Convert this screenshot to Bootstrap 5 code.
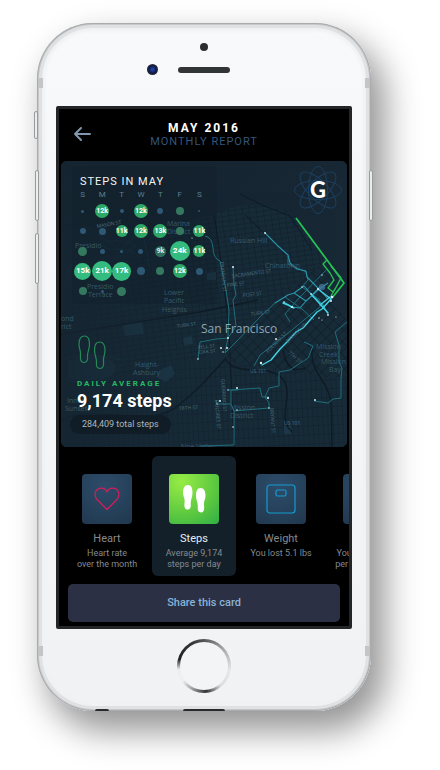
<!DOCTYPE html>
<html lang="en">
<head>
<meta charset="utf-8">
<meta name="viewport" content="width=device-width, initial-scale=1">
<title>Monthly report – May 2016</title>
<link rel="stylesheet" href="https://cdn.jsdelivr.net/npm/bootstrap@5.3.0/dist/css/bootstrap.min.css">
<style>
  body { background: #fff; font-family: Roboto, "Liberation Sans", sans-serif; }
  .stage { padding: 23px 69px 58px 37px; }

  /* Phone body */
  .phone {
    border-radius: 56px;
    background: linear-gradient(#f8f9fb, #f1f2f4);
    box-shadow:
      inset 0 0 0 1px #a9abad, inset 0 0 0 2px #c6c8ca,
      inset 0 0 0 5px #dfe1e3, inset 0 0 3px 8px #f0f1f3,
      12px 18px 34px 2px rgba(0,0,0,.42);
  }
  .bezel-top { height: 83px; padding-top: 20px; gap: 13px; }
  .sensor { width: 8px; height: 8px; background: #2b2d2f; }
  .speaker { width: 52px; height: 6px; background: #323536; }
  .lens { width: 11px; height: 11px; background: radial-gradient(circle, #1b3fa0 0 15%, #101b48 45%, #2a2a2e 75%); }
  .bezel-top .spacer { width: 11px; }
  .bezel-bottom { height: 82px; padding-top: 10px; }
  .home-btn {
    width: 54px; height: 54px; border: 3px solid transparent;
    background:
      linear-gradient(#f3f4f6, #f3f4f6) padding-box,
      conic-gradient(#555 0, #aaa 50deg, #e6e6e6 100deg, #ddd 140deg, #333 175deg, #999 205deg, #f0f0f0 235deg, #eee 262deg, #222 285deg, #333 330deg, #555 360deg) border-box;
  }
  .side-key { position: absolute; width: 4px; border: 1px solid #97999b; border-radius: 2px; background: #eceded; }
  .key-mute { left: -3px; top: 88px; height: 28px; }
  .key-up { left: -2px; top: 147px; height: 51px; }
  .key-down { left: -2px; top: 210px; height: 51px; }
  .key-power { right: -2px; top: 147px; height: 51px; }
  .antenna { position: absolute; width: 5px; height: 10px; background: #c3c5c7; }
  .antenna-l { left: 1px; } .antenna-r { right: 1px; }
  .antenna-t { top: 55px; } .antenna-b { bottom: 55px; }
  .port { position: absolute; bottom: 0; height: 2px; border-radius: 4px 4px 0 0; background: #292a2b; }
  .port-jack { left: 58px; width: 14px; }
  .port-dock { left: 146px; width: 42px; }

  /* Screen */
  .screen { margin: 0 19px; border: 3px solid #242526; border-radius: 2px; background: #000; }
  .topbar { height: 52px; padding: 12px 14px 0; }
  .side-slot { width: 20px; }
  .topbar h1 { font-size: 12px; line-height: 14px; letter-spacing: 2px; font-weight: 700; color: #fff; }
  .topbar p { font-size: 11px; line-height: 14px; letter-spacing: 1px; color: #33567a; }

  /* Report card */
  .report { margin: 0 2px; border-radius: 6px; background: #172733; aspect-ratio: 1; padding: 14px 5px 13px 12px; }
  .report-map { position: absolute; inset: 0; width: 100%; height: 100%; }
  .report h2 { font-size: 11px; line-height: 14px; letter-spacing: 1px; color: #f1f4f6; padding-left: 7px; }
  .calendar { width: 136px; table-layout: fixed; text-align: center; }
  .calendar th { font-size: 8px; line-height: 12px; font-weight: 400; color: #5b7f93; padding: 0; }
  .calendar td { padding: 0; }
  .cell { height: 20px; }
  .dot { background: #2f5875; flex: none; }
  .dot.ok { background: #34795f; }
  .dot.hit { background: #2ea866; color: #fff; font-weight: 700; font-size: 7px; }
  .dot.near { background: #2f6f5c; color: #dfe9e5; font-weight: 700; font-size: 7px; }
  .dot.best { background: #34bb80; color: #fff; font-weight: 700; font-size: 8px; }
  .d2{width:2px;height:2px}.d3{width:3px;height:3px}.d4{width:4px;height:4px}.d5{width:5px;height:5px}
  .d6{width:6px;height:6px}.d7{width:7px;height:7px}.d8{width:8px;height:8px}.d9{width:9px;height:9px}
  .d11{width:11px;height:11px}.d12{width:12px;height:12px}.d14{width:14px;height:14px}
  .d17{width:17px;height:17px}.d19{width:19px;height:19px}.d20{width:20px;height:20px}
  .atom { margin-top: -9px; }
  .avg-label { font-size: 8px; line-height: 12px; letter-spacing: 2px; font-weight: 700; color: #29b866; }
  .avg-value { font-size: 18px; line-height: 22px; font-weight: 700; color: #fff; }
  .total { font-size: 9px; line-height: 19px; padding: 0 12px; color: #a9b6bf; background: #111d26; margin: 3px 0 0 -7px; }
  .summary { padding-left: 4px; }

  /* Metric picker */
  .metrics { gap: 3px; padding: 9px 6px 8px; }
  .metric { flex: 0 0 84px; height: 120px; border: 0; border-radius: 6px; background: none; padding: 18px 0 0; color: #858a8f; }
  .metric.active { background: #13202a; }
  .tile { width: 50px; height: 50px; border-radius: 4px; background: radial-gradient(circle at 45% 25%, #2d4c6a, #20384e); }
  .active .tile { background: radial-gradient(circle at 25% 15%, #97ec45, #5cc840 60%, #2fae46); }
  .metric-name { font-size: 11px; line-height: 16px; margin-top: 7px; }
  .metric-note { font-size: 9px; line-height: 11px; margin-top: 1px; white-space: nowrap; }
  .active .metric-name { color: #e8ecee; }
  .share { height: 38px; margin: 0 9px 4px; border: 0; border-radius: 5px; background: #2c3044; color: #88b3d6; font-size: 11px; font-weight: 500; padding: 0; }
</style>
<script src="https://cdn.jsdelivr.net/npm/bootstrap@5.3.0/dist/js/bootstrap.bundle.min.js"></script>
</head>
<body>
<main class="stage">
<div class="phone position-relative d-flex flex-column">
  <span class="side-key key-mute"></span><span class="side-key key-up"></span><span class="side-key key-down"></span><span class="side-key key-power"></span>
  <span class="antenna antenna-l antenna-t"></span><span class="antenna antenna-r antenna-t"></span>
  <span class="antenna antenna-l antenna-b"></span><span class="antenna antenna-r antenna-b"></span>
  <span class="port port-jack"></span><span class="port port-dock"></span>

  <div class="bezel-top d-flex flex-column align-items-center">
    <span class="sensor rounded-circle"></span>
    <div class="d-flex align-items-center gap-3">
      <span class="lens rounded-circle me-1"></span>
      <span class="speaker rounded-pill"></span>
      <span class="spacer ms-1"></span>
    </div>
  </div>

  <div class="screen overflow-hidden">
    <header class="topbar d-flex justify-content-between">
      <a href="#" class="side-slot" aria-label="Back">
        <svg width="18" height="18" viewBox="0 0 18 18" fill="none" stroke="#8296ad" stroke-width="2" stroke-linecap="round" stroke-linejoin="round"><path d="M17 9H2M8 3L2 9L8 15"/></svg>
      </a>
      <div class="text-center">
        <h1 class="mb-0">MAY 2016</h1>
        <p class="mb-0">MONTHLY REPORT</p>
      </div>
      <span class="side-slot"></span>
    </header>

    <section class="report position-relative overflow-hidden d-flex flex-column justify-content-between">
      <svg class="report-map" viewBox="61 161 286 286" preserveAspectRatio="xMidYMid slice" aria-hidden="true">
        <defs>
          <pattern id="blocks" width="7" height="5" patternUnits="userSpaceOnUse" patternTransform="rotate(-8)"><path d="M0 0H7M0 0V5" stroke="#0d1922" stroke-width=".7" fill="none"/></pattern>
          <pattern id="blocksSouth" width="5" height="9" patternUnits="userSpaceOnUse" patternTransform="rotate(-3)"><path d="M0 0H5M0 0V9" stroke="#101c26" stroke-width=".7" fill="none"/></pattern>
          <pattern id="blocksSoma" width="9" height="7" patternUnits="userSpaceOnUse" patternTransform="rotate(-45)"><path d="M0 0H9M0 0V7" stroke="#0c1720" stroke-width=".9" fill="none"/></pattern>
          <linearGradient id="fade" x1="0" x2="1" y1="0" y2="0"><stop offset="0" stop-color="#152531" stop-opacity=".75"/><stop offset=".55" stop-color="#152531" stop-opacity="0"/></linearGradient>
          <linearGradient id="bay" x1="0" x2="1" y1="0" y2="1"><stop offset="0" stop-color="#14222e"/><stop offset="1" stop-color="#1a2c3a"/></linearGradient>
        </defs>
        <rect x="61" y="161" width="286" height="286" fill="url(#bay)"/>
        <path d="M61 232L84 226L112 222L140 232L170 226L214 214L236 206L268 204L296 217L327 260L345 283L333 300L347 322V447H61Z" fill="#172b38"/>
        <path d="M130 258L150 240L214 214L236 206L268 204L296 217L327 260L270 305L200 360L61 385V305L130 290Z" fill="url(#blocks)"/>
        <path d="M61 385L200 360L232 362L300 372L347 380V447H61Z" fill="url(#blocksSouth)"/>
        <path d="M327 260L345 283L333 300L347 322V380L300 372L232 362L220 356L270 305Z" fill="url(#blocksSoma)"/>
        <g fill="#1d3848">
          <path d="M123 325L142 322L144 334L125 336Z"/><path d="M183 338L192 336L193 344L184 345Z"/><path d="M160 370L171 365L175 374L166 382L158 378Z"/>
          <path d="M207 273L216 272V280H207Z"/><path d="M284 426H291V434H284Z"/><path d="M68 362C82 352 112 352 116 368C112 382 80 382 68 378Z" opacity=".6"/>
        </g>
        <g fill="none" stroke="#0d1821" stroke-width="1.4" opacity=".8">
          <path d="M61 334L125 324L200 312L258 300"/><path d="M226 360C234 372 250 369 268 371C290 376 288 392 286 404C284 418 285 426 292 432"/>
          <path d="M283 350C286 366 292 373 305 368M312 350C310 372 328 382 330 398C333 416 331 430 332 447"/>
          <path d="M61 420C100 402 150 432 180 404C198 390 210 376 226 358"/><path d="M214 214L222 270L229 330L234 447" stroke-width="1"/>
          <path d="M240 194L262 205L290 216L312 250" stroke-width="1"/><path d="M245 215L288 255" stroke-width="1"/>
        </g>
        <g fill="none" stroke="#1a4350" stroke-width=".7" opacity=".8">
          <path d="M61 290C70 280 66 262 82 252C96 244 118 234 136 246C124 256 104 262 92 276"/><path d="M84 225L120 250L142 230L150 268M98 242C112 258 128 240 140 260"/>
          <path d="M61 362C80 350 104 356 122 360M61 378C90 390 112 378 124 362"/>
        </g>
        <rect x="61" y="161" width="286" height="286" fill="url(#fade)"/>
        <rect x="72" y="166" width="145" height="138" rx="3" fill="#101e29" opacity=".3"/>

        <g fill="none" stroke="#1f6f7c" stroke-width="1" stroke-linejoin="round">
          <path d="M205 236Q212 237 213 248Q213 258 220 261L226 290L229 310L228 338L225 353L236 342L260 317L275 303"/>
          <path d="M233 267L234 284L236 295L233 300L236 326L228 338"/>
          <path d="M198 359L200 342L216 339L228 338"/>
          <path d="M200 446L234 445V411L231 404H217L216 400M234 411L269 408L269 403L265 397L269 388L279 386V372L290 370L308 358L313 346L304 342"/>
          <path d="M231 404L231 390L260 388L262 397H269M228 390H238"/>
          <path d="M254 366L260 355L292 330L322 305M314 401L328 403L333 399L341 398V378L342 368L339 362V345L335 332L347 322"/>
          <path d="M288 256V264L297 268L306 272L308 280L302 287L320 300M290 322L285 314L300 297L326 270M285 297L292 302L302 309L314 320"/>
        </g>
        <g fill="none" stroke="#2b93aa" stroke-width="1.1" stroke-linejoin="round">
          <path d="M265 233L278 246L288 255L290 263L297 269L306 271L307 277L319 289L328 299"/>
          <path d="M275 303L288 295L294 293L306 301L300 308L292 307L284 302M294 293L304 286L312 295L320 287M306 301L318 290L328 283M312 295L323 305L328 314"/>
        </g>
        <g fill="none" stroke="#42d4e4" stroke-width="1.4" stroke-linejoin="round" stroke-linecap="round">
          <path d="M262 365L271 360L280 349L287 342L296 332L303 328L317 312L322 309L331 299"/>
          <path d="M283 303L288 305L294 308M318 289L331 299M311 294L328 313M320 305L330 297"/>
        </g>
        <g fill="none" stroke="#25bf55" stroke-linejoin="round">
          <path d="M296 218L327 260L344 283L332 298" stroke-width="1.8"/>
          <path d="M327 260L323 264L330 273L334 280L328 288L333 292L338 284L331 296M331 266L341 278L334 291" stroke-width="1.4"/>
        </g>
        <circle cx="322" cy="287" r="3.2" fill="#47759a" opacity=".75"/>
        <g fill="#dff3f7">
          <circle cx="265" cy="233" r=".9"/><circle cx="233" cy="267" r="1"/><circle cx="228" cy="338" r="1"/><circle cx="221" cy="348" r="1"/><circle cx="227" cy="348" r="1"/><circle cx="198" cy="359" r=".8"/><circle cx="223" cy="352" r=".7"/>
          <circle cx="276" cy="339" r="1"/><circle cx="261" cy="363" r="1.2"/><circle cx="237" cy="388" r="1"/><circle cx="228" cy="390" r=".7"/><circle cx="268" cy="398" r="1.1"/><circle cx="269" cy="408" r=".8"/><circle cx="220" cy="401" r="1"/><circle cx="217" cy="404" r=".7"/><circle cx="237" cy="410" r=".8"/><circle cx="233" cy="427" r=".8"/>
          <circle cx="315" cy="400" r=".9"/><circle cx="292" cy="307" r="1.1"/><circle cx="284" cy="302" r=".8"/><circle cx="332" cy="297" r="1.3"/><circle cx="331" cy="301" r="1"/><circle cx="318" cy="289" r="1"/><circle cx="322" cy="275" r=".7"/><circle cx="302" cy="287" r=".7"/><circle cx="328" cy="315" r=".9"/><circle cx="319" cy="318" r=".7"/><circle cx="322" cy="320" r=".6"/><circle cx="336" cy="317" r=".6"/><circle cx="192" cy="238" r=".6"/><circle cx="311" cy="294" r=".8"/>
        </g>

        <g font-family="Open Sans, Noto Sans, sans-serif" font-size="7" fill="#36596a">
          <text x="230" y="243">Russian Hill</text><text x="265" y="268">Chinatown</text>
          <text x="167" y="226">Marina</text><text x="167" y="234">District</text>
          <text x="75" y="248">Presidio</text><text x="87" y="289">Presidio</text><text x="88" y="297">Terrace</text>
          <text x="164" y="295">Lower</text><text x="164" y="303">Pacific</text><text x="162" y="312">Heights</text>
          <text x="135" y="367">Haight-</text><text x="133" y="375">Ashbury</text>
          <text x="61" y="321">ond</text><text x="61" y="329">rict</text><text x="67" y="403">Inner</text><text x="65" y="411">Sunset</text>
          <text x="316" y="349">Mission</text><text x="319" y="357">Creek</text><text x="321" y="364">Mission</text><text x="329" y="372">Bay</text>
          <text x="230" y="410">Mission</text><text x="230" y="418">District</text>
          <text x="181" y="449">Noe Valley</text>
        </g>
        <g font-family="Open Sans, Noto Sans, sans-serif" font-size="5" fill="#4a7080">
          <text transform="translate(232 278) rotate(-8)">SACRAMENTO ST</text><text transform="translate(227 287) rotate(-7)">PINE ST</text><text transform="translate(243 297) rotate(-6)">POST ST</text>
          <text transform="translate(251 316) rotate(-8)">TURK ST</text><text transform="translate(177 328) rotate(-8)">TURK ST</text><text transform="translate(97 228) rotate(-10)">MASON ST</text>
          <text transform="translate(198 349) rotate(-6)">FELL ST</text><text transform="translate(199 354) rotate(-6)">OAK ST</text><text transform="translate(179 410) rotate(-3)">18TH ST</text>
          <text x="250" y="373">US 101</text><text x="284" y="425">US 101</text>
          <text transform="translate(268 353) rotate(-45)">FOLSOM ST</text><text transform="translate(288 343) rotate(-43)">BRYANT ST</text><text transform="translate(288 353) rotate(43)">7TH ST</text>
          <text transform="translate(221 379) rotate(86)">GUERRERO ST</text><text transform="translate(215 400) rotate(86)">DOLORES ST</text><text transform="translate(270 408) rotate(86)">BRYANT ST</text><text transform="translate(220 262) rotate(84)">FRANKLIN ST</text>
        </g>
        <text x="201" y="333" font-family="Open Sans, Noto Sans, sans-serif" font-size="12" fill="#8fa6b3">San Francisco</text>
      </svg>

      <div class="position-relative d-flex justify-content-between align-items-start">
        <div>
          <h2 class="mb-0 fw-normal">STEPS IN MAY</h2>
          <table class="calendar">
            <thead><tr><th scope="col">S</th><th scope="col">M</th><th scope="col">T</th><th scope="col">W</th><th scope="col">T</th><th scope="col">F</th><th scope="col">S</th></tr></thead>
            <tbody>
              <tr>
                <td><div class="cell d-flex align-items-center justify-content-center"><span class="dot rounded-circle d3"></span></div></td>
                <td><div class="cell d-flex align-items-center justify-content-center"><span class="dot hit rounded-circle d14 d-flex align-items-center justify-content-center">12k</span></div></td>
                <td><div class="cell d-flex align-items-center justify-content-center"><span class="dot rounded-circle d4"></span></div></td>
                <td><div class="cell d-flex align-items-center justify-content-center"><span class="dot hit rounded-circle d14 d-flex align-items-center justify-content-center">12k</span></div></td>
                <td><div class="cell d-flex align-items-center justify-content-center"><span class="dot rounded-circle d6"></span></div></td>
                <td><div class="cell d-flex align-items-center justify-content-center"><span class="dot ok rounded-circle d8"></span></div></td>
                <td><div class="cell d-flex align-items-center justify-content-center"><span class="dot rounded-circle d2"></span></div></td>
              </tr>
              <tr>
                <td><div class="cell d-flex align-items-center justify-content-center"><span class="dot rounded-circle d6"></span></div></td>
                <td><div class="cell d-flex align-items-center justify-content-center"><span class="dot rounded-circle d7"></span></div></td>
                <td><div class="cell d-flex align-items-center justify-content-center"><span class="dot hit rounded-circle d12 d-flex align-items-center justify-content-center">11k</span></div></td>
                <td><div class="cell d-flex align-items-center justify-content-center"><span class="dot hit rounded-circle d14 d-flex align-items-center justify-content-center">12k</span></div></td>
                <td><div class="cell d-flex align-items-center justify-content-center"><span class="dot hit rounded-circle d14 d-flex align-items-center justify-content-center">13k</span></div></td>
                <td><div class="cell d-flex align-items-center justify-content-center"><span class="dot ok rounded-circle d8"></span></div></td>
                <td><div class="cell d-flex align-items-center justify-content-center"><span class="dot hit rounded-circle d12 d-flex align-items-center justify-content-center">11k</span></div></td>
              </tr>
              <tr>
                <td><div class="cell d-flex align-items-center justify-content-center"><span class="dot ok rounded-circle d9"></span></div></td>
                <td><div class="cell d-flex align-items-center justify-content-center"><span class="dot rounded-circle d5"></span></div></td>
                <td><div class="cell d-flex align-items-center justify-content-center"><span class="dot rounded-circle d3"></span></div></td>
                <td><div class="cell d-flex align-items-center justify-content-center"><span class="dot rounded-circle d5"></span></div></td>
                <td><div class="cell d-flex align-items-center justify-content-center"><span class="dot near rounded-circle d11 d-flex align-items-center justify-content-center">9k</span></div></td>
                <td><div class="cell d-flex align-items-center justify-content-center"><span class="dot best rounded-circle d20 d-flex align-items-center justify-content-center">24k</span></div></td>
                <td><div class="cell d-flex align-items-center justify-content-center"><span class="dot hit rounded-circle d12 d-flex align-items-center justify-content-center">11k</span></div></td>
              </tr>
              <tr>
                <td><div class="cell d-flex align-items-center justify-content-center"><span class="dot best rounded-circle d17 d-flex align-items-center justify-content-center">15k</span></div></td>
                <td><div class="cell d-flex align-items-center justify-content-center"><span class="dot best rounded-circle d20 d-flex align-items-center justify-content-center">21k</span></div></td>
                <td><div class="cell d-flex align-items-center justify-content-center"><span class="dot best rounded-circle d19 d-flex align-items-center justify-content-center">17k</span></div></td>
                <td><div class="cell d-flex align-items-center justify-content-center"><span class="dot rounded-circle d8"></span></div></td>
                <td><div class="cell d-flex align-items-center justify-content-center"><span class="dot ok rounded-circle d8"></span></div></td>
                <td><div class="cell d-flex align-items-center justify-content-center"><span class="dot hit rounded-circle d14 d-flex align-items-center justify-content-center">12k</span></div></td>
                <td><div class="cell d-flex align-items-center justify-content-center"><span class="dot rounded-circle d7"></span></div></td>
              </tr>
              <tr>
                <td><div class="cell d-flex align-items-center justify-content-center"><span class="dot ok rounded-circle d8"></span></div></td>
                <td><div class="cell d-flex align-items-center justify-content-center"><span class="dot rounded-circle d3"></span></div></td>
                <td><div class="cell d-flex align-items-center justify-content-center"><span class="dot ok rounded-circle d9"></span></div></td>
                <td></td><td></td><td></td><td></td>
              </tr>
            </tbody>
          </table>
        </div>
        <svg class="atom" width="48" height="48" viewBox="-24 -24 48 48" role="img" aria-label="G">
          <g fill="none" stroke="#1e3f5d" stroke-width="1">
            <ellipse rx="23.5" ry="9.5"/><ellipse rx="23.5" ry="9.5" transform="rotate(45)"/><ellipse rx="23.5" ry="9.5" transform="rotate(90)"/><ellipse rx="23.5" ry="9.5" transform="rotate(135)"/>
          </g>
          <text x="0" y="8" text-anchor="middle" font-family="Lato, Open Sans, sans-serif" font-weight="900" font-size="22" fill="#fff">G</text>
        </svg>
      </div>

      <div class="summary position-relative d-flex flex-column align-items-start">
        <svg class="mb-2" width="30" height="35" viewBox="0 0 30 35" fill="none" stroke="#238a56" stroke-width="1.2" aria-hidden="true">
          <path d="M7.500 1C3.500 1 2 5 2 9.500C2 14 4 15.500 3.500 20C3 24.500 4 27.500 7 27.500C10 27.500 11 25 10.500 21.500C10 18 12.500 14 12.500 9.500C12.500 5 11.500 1 7.500 1Z"/>
          <path d="M22.500 7C26.500 7 28 11 28 15.500C28 20 26 22 26.500 26C27 30.500 26 33.500 23 33.500C20 33.500 19 31 19.500 27.500C20 24 17.500 20 17.500 15.500C17.500 11 18.500 7 22.500 7Z"/>
        </svg>
        <div class="avg-label">DAILY AVERAGE</div>
        <div class="avg-value">9,174 steps</div>
        <div class="total rounded-pill">284,409 total steps</div>
      </div>
    </section>

    <nav class="metrics d-flex overflow-hidden" aria-label="Metrics">
      <button type="button" class="metric d-flex flex-column align-items-center">
        <span class="tile d-flex align-items-center justify-content-center">
          <svg width="26" height="24" viewBox="0 0 26 24" fill="none" stroke="#d91c5c" stroke-width="1.2" stroke-linejoin="round"><path d="M13 22.500L3 12.500C-.500 8.500 1 1.500 7 1.200C10 1 12 3 13 5C14 3 16 1 19 1.200C25 1.500 26.500 8.500 23 12.500Z"/></svg>
        </span>
        <span class="metric-name">Heart</span>
        <span class="metric-note">Heart rate<br>over the month</span>
      </button>
      <button type="button" class="metric active d-flex flex-column align-items-center" aria-pressed="true">
        <span class="tile d-flex align-items-center justify-content-center">
          <svg width="24" height="28" viewBox="0 0 24 28" fill="#fff"><path d="M6 0C2.500 0 1 3.500 1 7.500C1 11.500 3 13 2.600 17C2 21.500 2.500 24.500 5.500 24.500C8.500 24.500 9 22 8.700 18.500C8.500 15 10.500 12 10.500 8C10.500 3.500 9.500 0 6 0Z"/><path d="M18.500 3C22 3 23.500 6.500 23.500 10.500C23.500 14.500 21.500 16.500 22 20C22.500 24.500 22 27.500 19 27.500C16 27.500 15.500 25 15.800 21.500C16 18 14 15 14 11C14 6.500 15 3 18.500 3Z"/></svg>
        </span>
        <span class="metric-name">Steps</span>
        <span class="metric-note">Average 9,174<br>steps per day</span>
      </button>
      <button type="button" class="metric d-flex flex-column align-items-center">
        <span class="tile d-flex align-items-center justify-content-center">
          <svg width="30" height="30" viewBox="0 0 30 30" fill="none" stroke="#149bd0" stroke-width="1.200"><rect x="1" y="1" width="28" height="28" rx="3"/><rect x="10" y="6" width="10" height="6" rx="1.500"/></svg>
        </span>
        <span class="metric-name">Weight</span>
        <span class="metric-note">You lost 5.1 lbs</span>
      </button>
      <button type="button" class="metric d-flex flex-column align-items-center">
        <span class="tile"></span>
        <span class="metric-name">Burned</span>
        <span class="metric-note">You burned 410<br>per day this May</span>
      </button>
    </nav>
    <div class="d-grid"><button type="button" class="share">Share this card</button></div>
  </div>

  <div class="bezel-bottom d-flex justify-content-center">
    <button type="button" class="home-btn rounded-circle" aria-label="Home"></button>
  </div>
</div>
</main>
</body>
</html>
